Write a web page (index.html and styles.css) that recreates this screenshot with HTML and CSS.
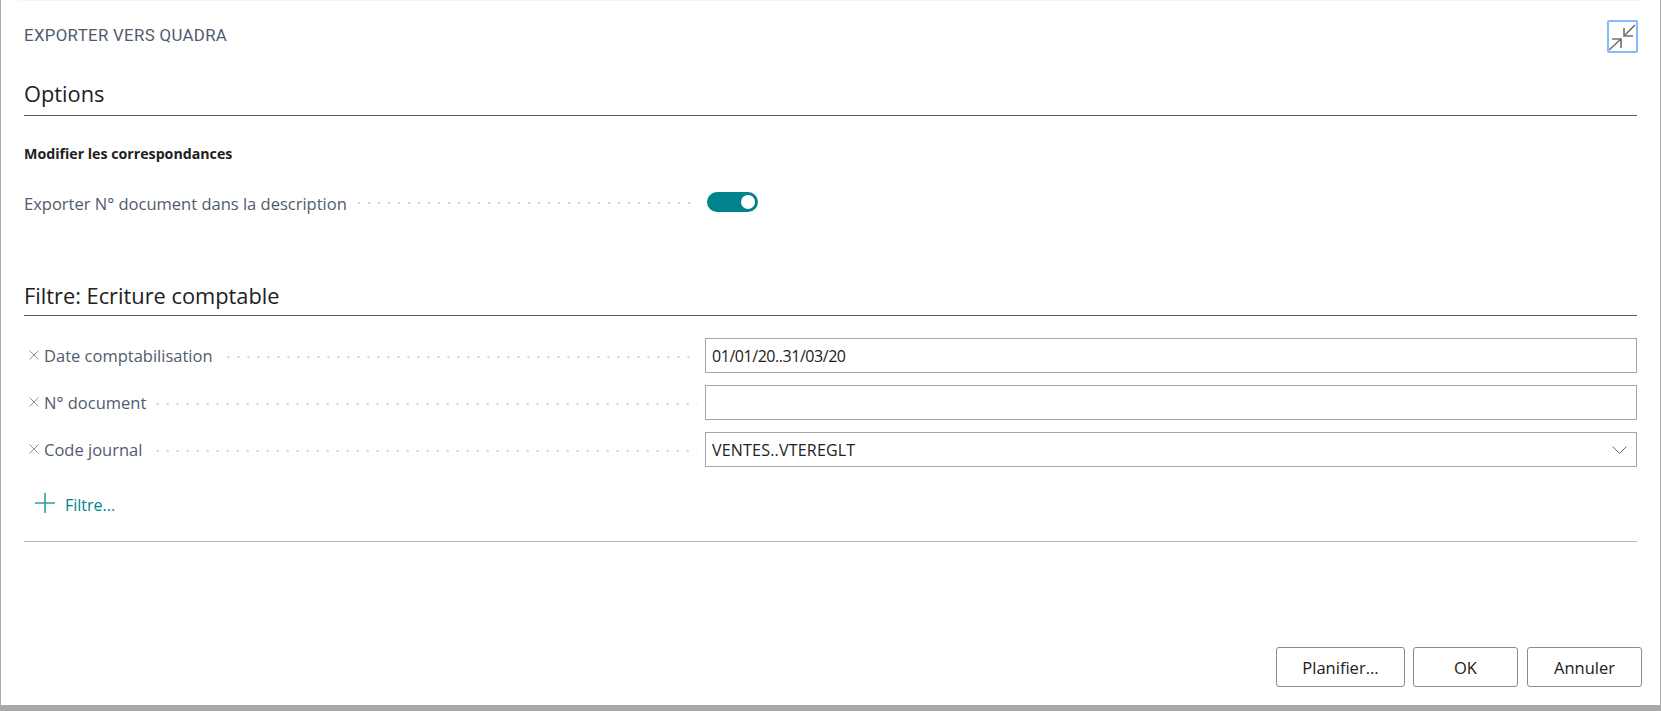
FILE: index.html
```html
<!DOCTYPE html>
<html lang="fr">
<head>
    <meta charset="UTF-8">
    <meta name="viewport" content="width=device-width, initial-scale=1.0">
    <title>Exporter vers Quadra</title>
    <link rel="stylesheet" href="styles.css">
</head>
<body>
    <div class="dialog">
        <div class="top-edge"></div>
        <header class="dialog-header">
            <span class="dialog-title">EXPORTER VERS QUADRA</span>
            <button class="collapse-btn" type="button" aria-label="Réduire">
                <svg width="27" height="29" viewBox="0 0 27 29" fill="none" stroke="#707070" stroke-width="1.6">
                    <path d="M26 3L15 14M15 6V14H24"/>
                    <path d="M0 28L12 17M3 17H12V26"/>
                </svg>
            </button>
        </header>

        <section class="options">
            <h2 class="section-title">Options</h2>
            <h3 class="group-title">Modifier les correspondances</h3>
            <div class="field toggle-field">
                <label class="field-label">Exporter N° document dans la description</label>
                <span class="leader"></span>
                <span class="toggle"><span class="toggle-knob"></span></span>
            </div>
        </section>

        <section class="filters">
            <h2 class="section-title">Filtre: Ecriture comptable</h2>
            <div class="filter-rows">
                <div class="field filter-row">
                    <svg class="remove-icon" width="10" height="10" viewBox="0 0 10 10"><path d="M0.5 0.5L9.5 9.5M9.5 0.5L0.5 9.5"/></svg>
                    <label class="field-label">Date comptabilisation</label>
                    <span class="leader"></span>
                    <div class="input-box"><input class="input-date" type="text" value="01/01/20..31/03/20"></div>
                </div>
                <div class="field filter-row">
                    <svg class="remove-icon" width="10" height="10" viewBox="0 0 10 10"><path d="M0.5 0.5L9.5 9.5M9.5 0.5L0.5 9.5"/></svg>
                    <label class="field-label">N° document</label>
                    <span class="leader"></span>
                    <div class="input-box"><input type="text" value=""></div>
                </div>
                <div class="field filter-row">
                    <svg class="remove-icon" width="10" height="10" viewBox="0 0 10 10"><path d="M0.5 0.5L9.5 9.5M9.5 0.5L0.5 9.5"/></svg>
                    <label class="field-label">Code journal</label>
                    <span class="leader"></span>
                    <div class="input-box">
                        <input class="input-code" type="text" value="VENTES..VTEREGLT">
                        <svg class="chevron" width="15" height="8" viewBox="0 0 15 8" fill="none" stroke="#666" stroke-width="1"><path d="M0.5 0.5L7.5 7.5L14.5 0.5"/></svg>
                    </div>
                </div>
            </div>
            <a class="add-filter" href="#">
                <svg width="20" height="20" viewBox="0 0 20 20" stroke="#2f9e9e" stroke-width="1.6"><path d="M10 0V20M0 10H20"/></svg>
                <span class="add-filter-text">Filtre...</span>
            </a>
            <div class="end-rule"></div>
        </section>

        <footer class="dialog-footer">
            <button class="btn btn-plan" type="button">Planifier...</button>
            <button class="btn btn-ok" type="button">OK</button>
            <button class="btn btn-cancel" type="button">Annuler</button>
        </footer>
    </div>
</body>
</html>
```

FILE: styles.css
```css
html, body {
    height: 100%;
}
body {
    margin: 0;
    background-color: #a9a9a9;
    font-family: "Open Sans", "Liberation Sans", sans-serif;
    overflow: hidden;
}
.dialog {
    display: flex;
    flex-direction: column;
    box-sizing: border-box;
    height: 705px;
    margin: 0 1px;
    padding: 0 23px 18px 23px;
    background: #fff;
}
.top-edge {
    height: 1px;
    margin: 0 -5px 0 -5px;
    background: #f5f5f5;
}
.dialog-header {
    display: flex;
    justify-content: space-between;
    align-items: flex-start;
    height: 70px;
    padding-top: 19px;
    box-sizing: border-box;
}
.dialog-title {
    margin-top: 5px;
    font-family: Roboto, "Open Sans", sans-serif;
    font-size: 16.8px;
    line-height: 20px;
    letter-spacing: 0.35px;
    color: #505c6d;
}
.collapse-btn {
    display: flex;
    align-items: center;
    justify-content: center;
    box-sizing: border-box;
    width: 31px;
    height: 33px;
    margin-right: -1px;
    padding: 0;
    background: #fff;
    border: 2px solid #8ab8ff;
    border-radius: 2px;
}
.section-title {
    margin: 0;
    height: 45px;
    box-sizing: border-box;
    padding-top: 8px;
    font-size: 21.8px;
    line-height: 30px;
    font-weight: 400;
    color: #212121;
    border-bottom: 1px solid #505c6d;
}
.group-title {
    margin: 29px 0 0;
    font-size: 14.2px;
    line-height: 18px;
    font-weight: 700;
    color: #212121;
}
.field {
    display: flex;
    align-items: center;
}
.toggle-field {
    margin-top: 27px;
    height: 24px;
}
.field-label {
    font-size: 16.5px;
    line-height: 20px;
    color: #505c6d;
    white-space: nowrap;
}
.toggle-field .field-label {
    margin-top: 4px;
}
.leader {
    flex: 1;
    height: 2px;
    margin: 2px 8px 0 8px;
    background-image: linear-gradient(to right, #d0d0d0 2px, transparent 2px);
    background-size: 10px 2px;
    background-position: right;
    background-repeat: repeat-x;
}
.toggle {
    display: flex;
    align-items: center;
    justify-content: flex-end;
    box-sizing: border-box;
    width: 51px;
    height: 20px;
    margin-right: 879px;
    margin-left: 1px;
    padding-right: 3px;
    background: #00838b;
    border-radius: 10px;
}
.toggle-knob {
    width: 14px;
    height: 14px;
    background: #fff;
    border-radius: 50%;
}
.filters {
    margin-top: 66px;
}
.filters .section-title {
    height: 36px;
    padding-top: 1px;
}
.filter-rows {
    display: flex;
    flex-direction: column;
    gap: 12px;
    margin-top: 22px;
}
.filter-row {
    height: 35px;
    padding-left: 5px;
}
.remove-icon {
    flex: none;
    margin: -2px 5px 0 0;
    stroke: #8a8f98;
    stroke-width: 1;
    fill: none;
}
.input-box {
    display: flex;
    align-items: center;
    box-sizing: border-box;
    width: 932px;
    height: 35px;
    border: 1px solid #a6a6a6;
}
.input-box input {
    flex: 1;
    min-width: 0;
    height: 100%;
    padding: 0 6px;
    border: none;
    outline: none;
    background: transparent;
    font-family: inherit;
    font-size: 16px;
    color: #212121;
}
.input-box .input-date {
    letter-spacing: -0.45px;
}
.input-box .input-code {
    letter-spacing: 0.2px;
}
.chevron {
    flex: none;
    margin: 0 9px 0 0;
}
.add-filter {
    display: flex;
    align-items: center;
    gap: 10px;
    margin-top: 26px;
    padding-left: 11px;
    height: 20px;
    font-size: 16px;
    color: #00838b;
    text-decoration: none;
}
.add-filter-text {
    margin-top: 3px;
}
.end-rule {
    margin-top: 28px;
    height: 1px;
    background: #b8b8bc;
}
.dialog-footer {
    display: flex;
    justify-content: flex-end;
    gap: 8px;
    margin-top: auto;
    margin-right: -5px;
}
.btn {
    height: 40px;
    padding: 0;
    background: #fff;
    border: 1px solid #8a8a8a;
    border-radius: 3px;
    font-family: inherit;
    font-size: 16.5px;
    color: #212121;
}
.btn-plan {
    width: 129px;
}
.btn-ok {
    width: 105px;
    margin-right: 1px;
}
.btn-cancel {
    width: 115px;
}
```
